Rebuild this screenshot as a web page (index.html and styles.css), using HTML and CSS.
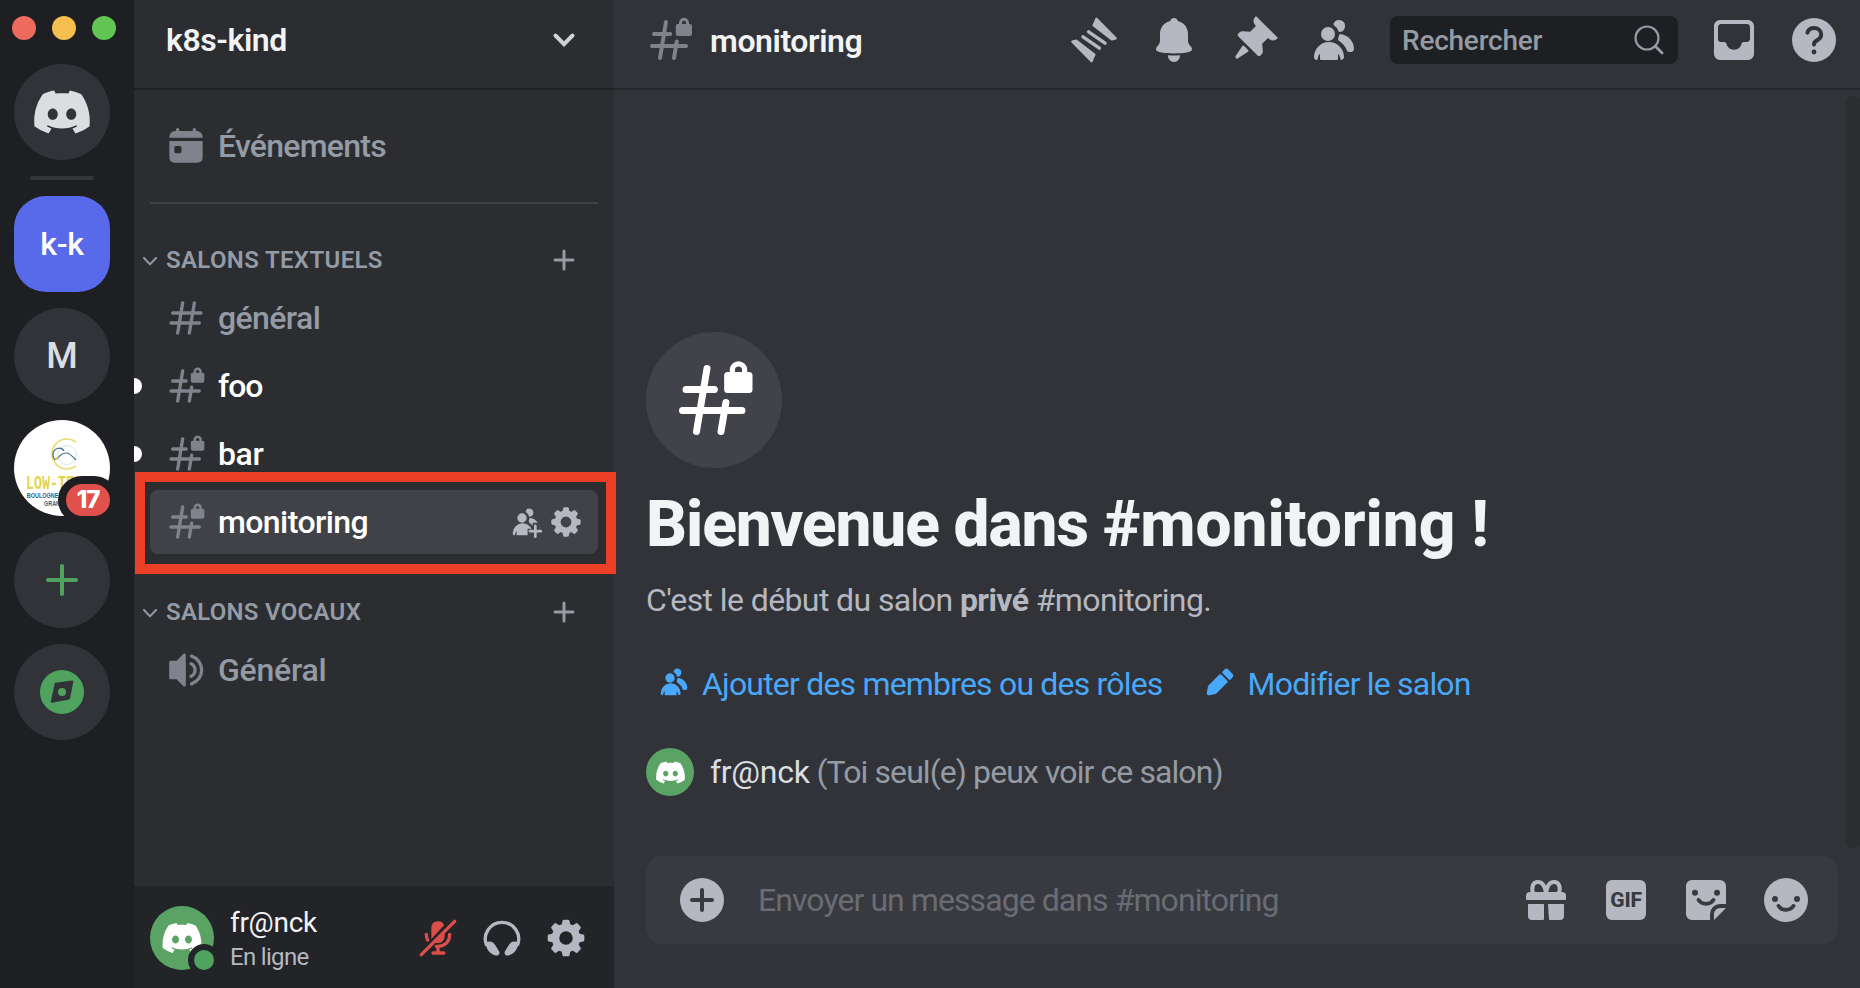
FILE: index.html
```
<!DOCTYPE html>
<html lang="fr">
<head>
<meta charset="utf-8">
<title>monitoring - k8s-kind</title>
<link rel="stylesheet" href="styles.css">
</head>
<body>
<svg class="sprite" aria-hidden="true">
  <defs>
    <symbol id="clyde" viewBox="0 0 24 24"><path fill="currentColor" d="M19.73 4.87a18.2 18.2 0 0 0-4.6-1.44c-.21.4-.4.8-.58 1.21-1.69-.25-3.4-.25-5.1 0-.18-.41-.37-.82-.59-1.2-1.6.27-3.14.75-4.6 1.43A19.04 19.04 0 0 0 .96 17.7a18.43 18.43 0 0 0 5.63 2.87c.46-.62.86-1.28 1.2-1.98-.65-.25-1.29-.55-1.9-.92.17-.12.32-.24.47-.37 3.58 1.7 7.7 1.7 11.28 0l.46.37c-.6.36-1.25.67-1.9.92.35.7.75 1.35 1.2 1.98 2.03-.63 3.94-1.6 5.64-2.87.47-4.87-.78-9.09-3.3-12.83ZM8.3 15.12c-1.1 0-2-1.02-2-2.27 0-1.24.88-2.26 2-2.26s2.02 1.02 2 2.26c0 1.25-.89 2.27-2 2.27Zm7.4 0c-1.1 0-2-1.02-2-2.27 0-1.24.88-2.26 2-2.26s2.02 1.02 2 2.26c0 1.25-.88 2.27-2 2.27Z"/></symbol>
    <symbol id="hash" viewBox="0 0 24 24"><path fill="none" stroke="currentColor" stroke-width="2" stroke-linecap="round" d="M10 3 7 21M17 3l-3 18M4 9h17M3 15h17"/></symbol>
    <symbol id="hash-lock" viewBox="0 0 24 24"><path fill="none" stroke="currentColor" stroke-width="2" stroke-linecap="round" d="M10 3 7 21M15.4 12.7 14 21M4 9h8.1M3 15h17"/><path fill="none" stroke="currentColor" stroke-width="1.5" d="M17.25 5V3.4a1.75 1.75 0 0 1 3.5 0V5"/><rect fill="currentColor" x="14.9" y="4" width="8.1" height="6" rx="1"/></symbol>
    <symbol id="members" viewBox="0 0 24 24"><path fill="currentColor" d="M14.5 8a3 3 0 1 0-2.7-4.3c-.2.4.06.86.44 1.12a5 5 0 0 1 2.14 3.08c.01.06.06.1.12.1ZM18.44 17.27c.15.43.54.73 1 .73h1.06c.83 0 1.5-.67 1.5-1.5a7.5 7.5 0 0 0-6.5-7.43c-.55-.08-.99.38-1.1.92-.06.3-.15.6-.26.87-.23.58-.05 1.3.47 1.63a9.53 9.53 0 0 1 3.83 4.78ZM12.5 9a3.5 3.5 0 1 1-7 0 3.5 3.5 0 0 1 7 0ZM2 20.5a7.5 7.5 0 0 1 15 0c0 .83-.67 1.5-1.5 1.5a.2.2 0 0 1-.2-.16c-.2-.96-.56-1.87-.88-2.54-.1-.23-.42-.15-.42.1v2.1a.5.5 0 0 1-.5.5h-8a.5.5 0 0 1-.5-.5v-2.1c0-.25-.31-.33-.42-.1-.32.67-.67 1.58-.88 2.54a.2.2 0 0 1-.2.16A1.5 1.5 0 0 1 2 20.5Z"/></symbol>
    <symbol id="gear" viewBox="0 0 24 24">
      <circle cx="12" cy="12" r="6.3" fill="none" stroke="currentColor" stroke-width="4.5"/>
      <path id="tooth" fill="currentColor" d="M9.3 4.5 9.9 1.7Q10.05 1 10.8 1h2.4q.75 0 .9.7l.6 2.8Z"/>
      <use href="#tooth" transform="rotate(45 12 12)"/><use href="#tooth" transform="rotate(90 12 12)"/><use href="#tooth" transform="rotate(135 12 12)"/><use href="#tooth" transform="rotate(180 12 12)"/><use href="#tooth" transform="rotate(225 12 12)"/><use href="#tooth" transform="rotate(270 12 12)"/><use href="#tooth" transform="rotate(315 12 12)"/>
    </symbol>
    <symbol id="plus" viewBox="0 0 24 24"><path fill="none" stroke="currentColor" stroke-width="3" stroke-linecap="round" d="M12 3v18M3 12h18"/></symbol>
    <symbol id="caret" viewBox="0 0 14 9"><path fill="none" stroke="currentColor" stroke-width="2" stroke-linecap="round" d="m1 1 6 6.4L13 1"/></symbol>
    <mask id="plus-gap"><rect width="24" height="24" fill="#fff"/><path d="M13.2 17h3.8v-4.500h5V24h-8.800Z" fill="#000"/></mask>
  </defs>
</svg>

<div class="app">
  <nav class="rail">
    <div class="lights"><i class="red"></i><i class="amber"></i><i class="green"></i></div>
    <div class="server home"><svg class="logo-lg"><use href="#clyde"/></svg></div>
    <div class="rail-rule"></div>
    <div class="server active"><span class="kk">k-k</span></div>
    <div class="server"><span class="letter">M</span></div>
    <div class="server lowtech">
      <svg class="lowtech-art" viewBox="0 0 96 96">
        <circle cx="48" cy="48" r="48" fill="#fff"/>
        <path d="M62 22a15 15 0 1 0 0 24" fill="none" stroke="#e9dd72" stroke-width="1.6"/>
        <circle cx="53" cy="35" r="9.500" fill="none" stroke="#d5e8ea" stroke-width="1"/>
        <path d="M50 31c-3-5-11-3-11 4 0 3 2 6 4 4 3-4 5-6 9-6s7 4 10 7" fill="none" stroke="#3c6c96" stroke-width="1.2"/>
        <circle cx="42.500" cy="38.500" r="1.500" fill="#e6cf3e"/>
        <text class="art-title" x="12" y="69" textLength="64" lengthAdjust="spacingAndGlyphs">LOW-TECH</text>
        <text class="art-sub" x="12.800" y="78.300" textLength="31.500" lengthAdjust="spacingAndGlyphs">BOULOGNE</text>
        <text class="art-sub" x="30" y="85.600" textLength="16" lengthAdjust="spacingAndGlyphs">GRAN</text>
      </svg>
      <span class="badge">17</span>
    </div>
    <div class="server add"><svg viewBox="0 0 32 32" class="i32"><path fill="none" stroke="currentColor" stroke-width="4" stroke-linecap="round" d="M16 2v28M2 16h28"/></svg></div>
    <div class="server add"><svg viewBox="0 0 24 24" class="i48"><circle cx="12" cy="12" r="11" fill="currentColor"/><path fill="#313338" stroke="#313338" stroke-linejoin="round" stroke-width="1" d="m8.800 7.900 8.400-1.200-1.700 8.500-8.600 1.700Z"/><circle cx="12" cy="12" r="2" fill="currentColor"/></svg></div>
  </nav>

  <aside class="sidebar">
    <header class="server-head"><span class="server-name">k8s-kind</span>
      <svg class="head-caret" viewBox="0 0 24 16"><path d="m3.500 3.500 8.500 8.700 8.500-8.700" fill="none" stroke="currentColor" stroke-width="4" stroke-linecap="round"/></svg></header>
    <div class="row events">
      <svg class="i40" viewBox="0 0 24 24"><path fill="currentColor" fill-rule="evenodd" d="M6 2.200a1 1 0 0 1 2 0V3h8v-.8a1 1 0 0 1 2 0V3h.5A3.500 3.500 0 0 1 22 6.500V7H2v-.5A3.500 3.500 0 0 1 5.500 3H6ZM2 9h20v10a3 3 0 0 1-3 3H5a3 3 0 0 1-3-3ZM6 12a1 1 0 0 0-1 1v2.300a1 1 0 0 0 1 1h2.300a1 1 0 0 0 1-1V13a1 1 0 0 0-1-1Z"/></svg>
      <span class="label">Événements</span>
    </div>
    <hr class="rule">
    <div class="category first"><svg class="caret"><use href="#caret"/></svg><span class="cat-text">SALONS TEXTUELS</span><svg class="cat-plus"><use href="#plus"/></svg></div>
    <div class="channels">
      <div class="row"><svg class="i40"><use href="#hash"/></svg><span class="label g1">général</span></div>
      <div class="row unread"><svg class="i40"><use href="#hash-lock"/></svg><span class="label foo">foo</span></div>
      <div class="row unread"><svg class="i40"><use href="#hash-lock"/></svg><span class="label bar">bar</span></div>
      <div class="row selected"><svg class="i40"><use href="#hash-lock"/></svg><span class="label mon">monitoring</span>
        <span class="row-tools">
          <svg class="i32" viewBox="0 0 24 24"><g mask="url(#plus-gap)"><use href="#members"/></g><path d="M19 14.800v8.200M14.900 18.900h8.200" stroke="currentColor" stroke-width="2" stroke-linecap="round"/></svg>
          <svg class="i32"><use href="#gear"/></svg>
        </span>
      </div>
    </div>
    <div class="category second"><svg class="caret"><use href="#caret"/></svg><span class="cat-text vocal">SALONS VOCAUX</span><svg class="cat-plus"><use href="#plus"/></svg></div>
    <div class="row"><svg class="i40" viewBox="0 0 24 24"><path fill="currentColor" d="M10.500 2.300c.5-.5 1.400-.2 1.400.6v18.200c0 .8-.9 1.100-1.400.6L6.300 17.600H2.900a1 1 0 0 1-1-1V7.500a1 1 0 0 1 1-1h3.400Z"/><path fill="none" stroke="currentColor" stroke-width="2" stroke-linecap="round" d="M15 8.200a4.200 4.200 0 0 1 0 7.600M15.300 3.700a8.700 8.700 0 0 1 0 16.600"/></svg><span class="label g2">Général</span></div>

    <section class="user-panel">
      <div class="avatar"><svg class="logo-md"><use href="#clyde"/></svg><i class="status"></i></div>
      <div class="who"><span class="nick">fr@nck</span><span class="presence">En ligne</span></div>
      <div class="user-tools">
        <svg class="i40 muted" viewBox="0 0 24 24"><path fill="currentColor" d="M8 5.700a4 4 0 0 1 7.700-1.300L8 12.600ZM16 8.600V11a4 4 0 0 1-4.200 4h-1.700Z"/><path fill="none" stroke="currentColor" stroke-width="2" stroke-linecap="round" d="M22 2 2 22M5 9.800c0 1.400.2 2.400.8 3.400M19 9.800c0 4.500-3 7.200-7 7.200h-1M12 17.500V21M9 21h6.500"/></svg>
        <svg class="i40" viewBox="0 0 24 24"><path fill="none" stroke="currentColor" stroke-width="2" d="M2.800 16.500a10 10 0 1 1 18.400 0"/><path fill="currentColor" d="M2 14.800c2.600-1.400 4.800-.6 6.200 1.800l2 3.400c1 1.800-.8 3-2.500 2.400C4.600 21.300 2.500 18.500 2 14.800ZM22 14.800c-2.600-1.400-4.800-.6-6.200 1.800l-2 3.400c-1 1.800.8 3 2.500 2.400 3.100-1.100 5.200-3.900 5.700-7.600Z"/></svg>
        <svg class="i40"><use href="#gear"/></svg>
      </div>
    </section>
    <div class="highlight"></div>
  </aside>

  <main class="chat">
    <header class="chat-head">
      <svg class="i48 dim"><use href="#hash-lock"/></svg>
      <h1 class="title">monitoring</h1>
      <div class="tools">
        <svg class="i48" viewBox="0 0 24 24"><g id="wedge"><path fill="currentColor" stroke="currentColor" stroke-linejoin="round" stroke-width="1.200" d="M13.200 1.400 22.800 11.200 20.900 11.700 11.800 4.700 12.600 3Z"/></g><use href="#wedge" transform="rotate(180 12 12)"/><path stroke="currentColor" stroke-width="1.700" stroke-linecap="round" d="m9.300 7.900 8.200 5.700M6.500 10.400l8.200 5.700"/></svg>
        <svg class="i48" viewBox="0 0 24 24"><path fill="currentColor" d="M12 1c-1 0-1.600.6-1.900 1.500C7.100 3.300 5 5.700 5 9v3.200c0 1-.4 1.900-1.100 2.700-.6.600-.9 1.200-.9 1.900 0 1.500 4.500 1.900 9 1.900s9-.4 9-1.900c0-.7-.3-1.300-.9-1.900-.7-.8-1.100-1.700-1.100-2.700V9c0-3.300-2.100-5.700-5.100-6.500C13.600 1.600 13 1 12 1ZM9 20c0-.3.200-.4.500-.4a28 28 0 0 0 5 0c.3 0 .5.100.5.400a3 3 0 0 1-6 0Z"/></svg>
        <svg class="i48" viewBox="0 0 24 24"><path fill="currentColor" d="M19.380 11.380a3 3 0 0 0 4.240 0l.03-.03a.5.5 0 0 0 0-.7L13.350.350a.5.5 0 0 0-.7 0l-.03.03a3 3 0 0 0 0 4.240L13 5l-2.920 2.920-3.650-.34a2 2 0 0 0-1.600.58l-.62.630a1 1 0 0 0 0 1.420l9.580 9.580a1 1 0 0 0 1.420 0l.63-.63a2 2 0 0 0 .58-1.600l-.34-3.640L19 11l.38.38ZM9.070 17.070a.5.5 0 0 1-.08.770l-5.150 3.430a.5.5 0 0 1-.63-.06l-.42-.42a.5.5 0 0 1-.06-.63L6.160 15a.5.5 0 0 1 .770-.08l2.140 2.140Z"/></svg>
        <svg class="i48"><use href="#members"/></svg>
        <div class="search"><span class="search-text">Rechercher</span><svg class="i32" viewBox="0 0 32 32"><circle cx="14" cy="14" r="11.500" fill="none" stroke="currentColor" stroke-width="2.200"/><path d="m22.300 22.300 6.800 6.800" stroke="currentColor" stroke-width="2.800" stroke-linecap="round"/></svg></div>
        <svg class="i48" viewBox="0 0 24 24"><path fill="currentColor" fill-rule="evenodd" d="M5 2a3 3 0 0 0-3 3v14a3 3 0 0 0 3 3h14a3 3 0 0 0 3-3V5a3 3 0 0 0-3-3H5ZM4 5.500C4 4.670 4.670 4 5.500 4h13c.83 0 1.500.67 1.500 1.500v6c0 .83-.67 1.500-1.500 1.500h-1.650c-.51 0-.93.4-1.060.9a3.910 3.910 0 0 1-7.580 0c-.13-.5-.55-.9-1.060-.9H5.500A1.500 1.500 0 0 1 4 11.500v-6Z"/></svg>
        <svg class="i48" viewBox="0 0 24 24"><circle cx="12" cy="12" r="11" fill="currentColor"/><path fill="none" stroke="#313338" stroke-width="2" stroke-linecap="round" d="M8.700 8.300C9.200 6.900 10.400 6 12 6c2.100 0 3.600 1.400 3.600 3.300 0 1.500-.9 2.300-2.100 2.900-1 .5-1.500.9-1.500 2"/><circle cx="12" cy="18" r="1.200" fill="#313338"/></svg>
      </div>
    </header>

    <section class="welcome">
      <div class="welcome-icon"><svg class="i84"><use href="#hash-lock"/></svg></div>
      <h2 class="headline"><span class="greeting">Bienvenue dans </span><span class="channel-ref">#monitoring !</span></h2>
      <p class="intro">C'est le début du salon <b>privé</b> #monitoring.</p>
      <div class="links">
        <a class="link"><svg class="i32"><use href="#members"/></svg><span class="l1">Ajouter des membres ou des rôles</span></a>
        <a class="link"><svg class="i32" viewBox="0 0 24 24"><path fill="currentColor" d="m13.960 5.460 4.580 4.580a1 1 0 0 0 1.420 0l1.380-1.380a2 2 0 0 0 0-2.820l-3.180-3.180a2 2 0 0 0-2.820 0l-1.380 1.380a1 1 0 0 0 0 1.420ZM2.110 20.160l.73-4.220a3 3 0 0 1 .83-1.610l7.870-7.870a1 1 0 0 1 1.420 0l4.580 4.580a1 1 0 0 1 0 1.420l-7.870 7.870a3 3 0 0 1-1.600.83l-4.230.73a1.500 1.500 0 0 1-1.730-1.730Z"/></svg><span class="l2">Modifier le salon</span></a>
      </div>
      <div class="viewer"><span class="avatar-sm"><svg class="logo-sm"><use href="#clyde"/></svg></span><span class="viewer-name">fr@nck</span><span class="viewer-note">(Toi seul(e) peux voir ce salon)</span></div>
    </section>

    <div class="composer">
      <svg class="i48" viewBox="0 0 24 24"><circle cx="12" cy="12" r="11" fill="currentColor"/><path stroke="#383a40" stroke-width="2" stroke-linecap="round" d="M12 7v10M7 12h10"/></svg>
      <span class="placeholder">Envoyer un message dans #monitoring</span>
      <div class="composer-tools">
        <svg class="i48" viewBox="0 0 24 24"><path fill="none" stroke="currentColor" stroke-width="2" d="M5.800 9C4.400 6 5.300 3 8 3c2.400 0 3.500 2.200 4 5.500C12.500 5.200 13.600 3 16 3c2.700 0 3.600 3 2.200 6"/><path fill="currentColor" d="M2 10a2 2 0 0 1 2-2h16a2 2 0 0 1 2 2v1.500a.5.5 0 0 1-.5.5h-19a.5.5 0 0 1-.5-.5ZM3 14.500c0-.3.200-.5.5-.5h7c.3 0 .5.200.5.500v7a.5.5 0 0 1-.5.5H5a2 2 0 0 1-2-2ZM13 14.500c0-.3.200-.5.5-.5h7c.3 0 .5.200.5.500V20a2 2 0 0 1-2 2h-5a.5.5 0 0 1-.5-.5Z"/></svg>
        <span class="gif">GIF</span>
        <svg class="i48" viewBox="0 0 24 24"><path fill="currentColor" d="M5 2h14a3 3 0 0 1 3 3v9h-3a5 5 0 0 0-5 5v3H5a3 3 0 0 1-3-3V5a3 3 0 0 1 3-3ZM22 16l-6 6v-3a3 3 0 0 1 3-3Z"/><circle cx="6.500" cy="8.400" r="1.500" fill="#383a40"/><circle cx="17.500" cy="8.400" r="1.500" fill="#383a40"/><path fill="none" stroke="#383a40" stroke-width="2" stroke-linecap="round" d="M8.300 12c1.700 2.500 5.700 2.500 7.400 0"/></svg>
        <svg class="i48" viewBox="0 0 24 24"><circle cx="12" cy="12" r="11" fill="currentColor"/><circle cx="6.500" cy="11.500" r="1.500" fill="#383a40"/><circle cx="17.500" cy="11.500" r="1.500" fill="#383a40"/><path fill="none" stroke="#383a40" stroke-width="2" stroke-linecap="round" d="M8.300 15c1.700 2.500 5.700 2.500 7.400 0"/></svg>
      </div>
    </div>
    <div class="scroll-track"></div>
  </main>
</div>
</body>
</html>
```
FILE: styles.css
```
* { box-sizing: border-box; }
html, body { margin: 0; height: 100%; overflow: hidden; }
body { font-family: Roboto, "Open Sans", sans-serif; background: #313338; color: #dbdee1; }
svg { display: block; flex: none; }
.sprite { position: absolute; width: 0; height: 0; }
.i32 { width: 32px; height: 32px; }
.i40 { width: 40px; height: 40px; }
.i48 { width: 48px; height: 48px; }
.i84 { width: 84px; height: 84px; }

.app { display: grid; grid-template-columns: 134px 480px 1fr; height: 988px; }

/* server rail */
.rail { background: #1e1f22; display: flex; flex-direction: column; align-items: flex-start; padding: 16px 0 0 14px; gap: 16px; }
.lights { display: flex; gap: 16px; margin-left: -2px; height: 24px; margin-bottom: 8px; }
.lights i { width: 24px; height: 24px; border-radius: 50%; }
.red { background: #ed6a5e; }
.amber { background: #f5bf4f; }
.green { background: #61c554; }
.server { position: relative; width: 96px; height: 96px; border-radius: 50%; background: #313338; display: flex; align-items: center; justify-content: center; flex: none; }
.home { color: #dbdee1; }
.logo-lg { width: 60px; height: 60px; }
.rail-rule { width: 64px; height: 4px; border-radius: 2px; background: #35363c; margin-left: 16px; flex: none; }
.active { background: #5869ea; color: #fff; border-radius: 32px; }
.kk { font-size: 32px; font-weight: 500; letter-spacing: -.28px; }
.letter { font-size: 36px; font-weight: 500; }
.add { color: #4fa35f; }
.lowtech { background: none; }
.lowtech-art { width: 96px; height: 96px; }
.art-title { font: 700 21px "Liberation Mono", monospace; fill: #e3d44f; }
.art-sub { font: 700 7px "Liberation Sans", sans-serif; fill: #2f5f86; }
.badge { position: absolute; right: -8px; bottom: -8px; width: 60px; height: 48px; border: 8px solid #1e1f22; border-radius: 24px; background: #1e1f22; color: #fff; display: flex; align-items: center; justify-content: center; font: 800 24px/32px Inter, sans-serif; letter-spacing: -1px; z-index: 0; }
.badge::before { content: ""; position: absolute; inset: 0; border-radius: 16px; background: #e0504c; z-index: -1; }

/* channel list */
.sidebar { position: relative; background: #2b2d31; display: flex; flex-direction: column; min-width: 0; }
.server-head { height: 90px; padding: 0 38px 8px 32px; border-bottom: 2px solid #1f2023; display: flex; align-items: center; justify-content: space-between; color: #f2f3f5; flex: none; }
.server-name { font-size: 32px; font-weight: 600; letter-spacing: -.45px; }
.head-caret { width: 24px; height: 16px; color: #cfd1d6; margin-top: -1px; }
.row { height: 64px; margin: 0 16px; padding: 0 16px; border-radius: 8px; display: flex; align-items: center; gap: 12px; color: #80828c; flex: none; position: relative; }
.label { font-size: 32px; font-weight: 500; line-height: 40px; color: #949ba4; }
.events { margin-top: 24px; }
.events .label { letter-spacing: -.75px; }
.rule { width: 448px; height: 2px; border: 0; margin: 24px 16px 0; background: #3f4147; flex: none; }
.category { display: flex; align-items: center; height: 32px; padding: 0 38px 0 9px; color: #949ba4; flex: none; }
.first { margin-top: 40px; }
.second { margin-top: 42px; margin-bottom: 10px; }
.caret { width: 14px; height: 9px; margin-top: 2px; }
.cat-text { font-size: 24px; font-weight: 600; line-height: 32px; letter-spacing: .35px; margin-left: 9px; flex: 1; }
.vocal { letter-spacing: .28px; }
.cat-plus { width: 24px; height: 24px; }
.channels { display: flex; flex-direction: column; gap: 4px; margin-top: 10px; }
.g1 { letter-spacing: -.6px; }
.g2 { letter-spacing: -.25px; }
.unread .label, .selected .label { color: #fff; }
.unread::before { content: ""; position: absolute; left: -16px; top: 24px; width: 8px; height: 16px; border-radius: 0 8px 8px 0; background: #fff; }
.foo { letter-spacing: -1.1px; }
.bar { letter-spacing: -.37px; }
.mon { letter-spacing: -.58px; }
.selected { background: #414248; padding-right: 16px; }
.row-tools { display: flex; gap: 8px; margin-left: auto; color: #b5b8c0; }
.highlight { position: absolute; left: 1px; top: 472px; width: 481px; height: 102px; border: 10px solid #ec3f25; z-index: 3; }

.user-panel { margin-top: auto; height: 102px; background: #232428; display: flex; align-items: center; padding: 0 28px 0 16px; flex: none; color: #b5b8c0; }
.avatar { position: relative; width: 64px; height: 64px; border-radius: 50%; background: #5aa364; color: #fff; display: flex; align-items: center; justify-content: center; margin-top: 2px; }
.logo-md { width: 42px; height: 42px; }
.status { position: absolute; left: 38px; top: 38px; width: 32px; height: 32px; border-radius: 50%; border: 6px solid #232428; background: #4fa35f; }
.who { display: flex; flex-direction: column; margin: 3px 0 0 16px; }
.nick { font-size: 28px; line-height: 36px; font-weight: 400; color: #f2f3f5; letter-spacing: -.3px; }
.presence { font-size: 24px; line-height: 32px; letter-spacing: -.68px; }
.user-tools { display: flex; gap: 24px; margin-left: auto; margin-top: 2px; }
.muted { color: #dc4e4a; }

/* conversation */
.chat { position: relative; display: flex; flex-direction: column; min-width: 0; background: #313338; }
.chat-head { height: 90px; padding: 0 22px 8px 32px; border-bottom: 2px solid #26272b; display: flex; align-items: center; flex: none; }
.dim { color: #80828c; }
.title { margin: 1px 0 0 16px; font-size: 32px; font-weight: 600; letter-spacing: -.42px; color: #f2f3f5; line-height: 40px; }
.tools { display: flex; align-items: center; gap: 32px; margin-left: auto; color: #b5b8c0; }
.search { width: 288px; height: 48px; border-radius: 8px; background: #1e1f22; display: flex; align-items: center; justify-content: space-between; padding: 0 13px 0 12px; color: #949ba4; }
.search-text { font-size: 28px; font-weight: 500; letter-spacing: -.23px; }

.welcome { padding: 242px 32px 0; }
.welcome-icon { width: 136px; height: 136px; border-radius: 50%; background: #41424a; color: #fff; display: flex; align-items: center; justify-content: center; }
.headline { margin: 17px 0 0; font-size: 64px; line-height: 80px; font-weight: 800; color: #f2f3f5; white-space: nowrap; }
.greeting { letter-spacing: -1.12px; }
.channel-ref { letter-spacing: -.05px; }
.intro { margin: 15px 0 0; font-size: 32px; line-height: 40px; letter-spacing: -.6px; color: #b5b8c0; }
.links { display: flex; gap: 41px; margin: 44px 0 0 12px; color: #49a8fa; }
.link { display: flex; align-items: center; gap: 12px; font-size: 32px; line-height: 40px; }
.link svg { margin-top: -4px; }
.l1 { letter-spacing: -.81px; }
.l2 { letter-spacing: -.82px; }
.viewer { display: flex; align-items: center; height: 48px; margin-top: 44px; font-size: 32px; }
.avatar-sm { width: 48px; height: 48px; border-radius: 50%; background: #5aa364; color: #fff; display: flex; align-items: center; justify-content: center; }
.logo-sm { width: 31px; height: 31px; }
.viewer-name { margin-left: 16px; font-weight: 400; letter-spacing: -.3px; color: #dbdee1; }
.viewer-note { margin-left: 7px; letter-spacing: -.91px; color: #949ba4; }

.composer { margin: auto 22px 44px 32px; height: 88px; border-radius: 16px; background: #383a40; display: flex; align-items: center; padding: 0 28px 0 32px; color: #b5b8c0; flex: none; }
.placeholder { margin-left: 32px; font-size: 32px; letter-spacing: -.93px; color: #6a6c74; }
.composer-tools { display: flex; align-items: center; gap: 32px; margin-left: auto; }
.gif { width: 40px; height: 40px; margin: 0 4px; border-radius: 6px; background: #b5b8c0; color: #383a40; font-size: 21px; font-weight: 800; line-height: 40px; text-align: center; letter-spacing: -.2px; }
.scroll-track { position: absolute; right: -2px; top: 96px; width: 16px; height: 752px; border-radius: 8px; background: #2b2d31; }
```
